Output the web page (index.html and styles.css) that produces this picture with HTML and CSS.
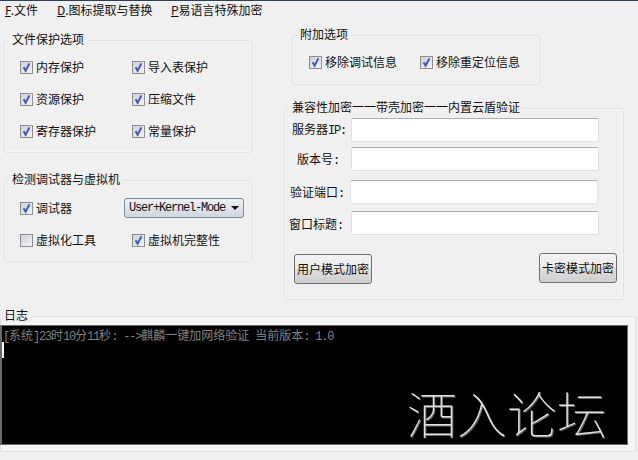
FILE: index.html
```html
<!DOCTYPE html>
<html lang="zh">
<head>
<meta charset="utf-8">
<title>麒麟一键加网络验证</title>
<link rel="stylesheet" href="styles.css">
</head>
<body>
<svg class="defs" width="0" height="0" aria-hidden="true">
  <symbol id="tick" viewBox="0 0 11 11">
    <path d="M2.6 5.2 L4.6 8.6 L8.4 1.4" fill="none" stroke="#3f5cb4" stroke-width="2"/>
  </symbol>
</svg>
<div class="app">
  <nav class="menu">
    <span class="menu-item"><u>F</u>.文件</span>
    <span class="menu-item"><u>D</u>.图标提取与替换</span>
    <span class="menu-item"><u>P</u>易语言特殊加密</span>
  </nav>
  <div class="main">
    <div class="col-left">
      <section class="group group-file">
        <div class="legend">文件保护选项</div>
        <div class="check-grid">
          <label class="check"><span class="box"><svg><use href="#tick"/></svg></span>内存保护</label>
          <label class="check"><span class="box"><svg><use href="#tick"/></svg></span>导入表保护</label>
          <label class="check"><span class="box"><svg><use href="#tick"/></svg></span>资源保护</label>
          <label class="check"><span class="box"><svg><use href="#tick"/></svg></span>压缩文件</label>
          <label class="check"><span class="box"><svg><use href="#tick"/></svg></span>寄存器保护</label>
          <label class="check"><span class="box"><svg><use href="#tick"/></svg></span>常量保护</label>
        </div>
      </section>
      <section class="group group-debug">
        <div class="legend">检测调试器与虚拟机</div>
        <div class="check-grid debug-grid">
          <label class="check"><span class="box"><svg><use href="#tick"/></svg></span>调试器</label>
          <div class="combo"><span class="latin">User+Kernel-Mode</span><i class="arrow"></i></div>
          <label class="check"><span class="box"></span>虚拟化工具</label>
          <label class="check"><span class="box"><svg><use href="#tick"/></svg></span>虚拟机完整性</label>
        </div>
      </section>
    </div>
    <div class="col-right">
      <section class="group group-extra">
        <div class="legend">附加选项</div>
        <div class="extra-row">
          <label class="check"><span class="box"><svg><use href="#tick"/></svg></span>移除调试信息</label>
          <label class="check"><span class="box"><svg><use href="#tick"/></svg></span>移除重定位信息</label>
        </div>
      </section>
      <section class="group group-compat">
        <div class="legend">兼容性加密一一带壳加密一一内置云盾验证</div>
        <div class="field"><span class="field-label label-server">服务器<span class="latin">IP:</span></span><input class="field-input" type="text"></div>
        <div class="field"><span class="field-label label-version">版本号<span class="latin">:</span></span><input class="field-input" type="text"></div>
        <div class="field field-shift"><span class="field-label label-port">验证端口<span class="latin">:</span></span><input class="field-input" type="text"></div>
        <div class="field"><span class="field-label label-title">窗口标题<span class="latin">:</span></span><input class="field-input" type="text"></div>
        <div class="actions">
          <button class="btn btn-user" type="button">用户模式加密</button>
          <button class="btn" type="button">卡密模式加密</button>
        </div>
      </section>
    </div>
  </div>
  <section class="group group-log">
    <div class="legend">日志</div>
    <div class="console">
      <div class="console-line"><span class="latin">[</span>系统<span class="latin">]23</span>时<span class="latin">10</span>分<span class="latin">11</span>秒<span class="latin">: --&gt;</span>麒麟一键加网络验证<span class="latin"> </span>当前版本<span class="latin">: 1.0</span></div>
      <div class="caret"></div>
      <div class="watermark">酒入论坛</div>
    </div>
  </section>
</div>
</body>
</html>
```
FILE: styles.css
```css
* { box-sizing: border-box; }
html, body { margin: 0; padding: 0; }
body {
  width: 638px;
  height: 460px;
  overflow: hidden;
  background: #f0f0f0;
  color: #111;
  font: 12px/14px "Noto Sans CJK SC", "Liberation Sans", sans-serif;
}
.defs { position: absolute; }
.app { height: 460px; border-top: 1px solid #2c4258; }
.latin {
  font-family: "Liberation Mono", monospace;
  font-size: 12px;
  letter-spacing: -1.2px;
  white-space: pre;
}

.menu { display: flex; height: 19px; padding: 2px 0 0 5px; }
.menu-item:nth-child(1) { width: 52px; }
.menu-item:nth-child(2) { width: 114px; }

.main { display: flex; height: 296px; }
.col-left { width: 284px; padding: 20px 0 0 4px; }
.col-right { width: 354px; padding: 15px 0 0 0; }

.group {
  border: 1px solid #dbe1e8;
  border-radius: 3px;
  box-shadow: inset 0 0 0 1px #f6f6f6;
}
.legend {
  width: fit-content;
  height: 14px;
  margin: -9px 0 0 4px;
  padding: 0 3px;
  background: #f0f0f0;
}

.group-file { width: 248px; height: 113px; }
.group-debug { width: 248px; height: 82px; margin-top: 27px; }
.group-extra { width: 248px; height: 50px; margin-left: 8px; }
.group-compat { width: 340px; height: 192px; margin-top: 23px; }
.group-log { width: 636px; height: 136px; background: #f5f5f5; }
.group-log .legend { margin-left: 0; }

.check { display: flex; align-items: center; gap: 3px; height: 14px; white-space: nowrap; }
.box {
  flex: none;
  width: 13px;
  height: 13px;
  border: 1px solid #8e8f8f;
  background: linear-gradient(135deg, #ccd0d8, #f4f5f7);
}
.box svg { display: block; width: 11px; height: 11px; }

.check-grid {
  display: grid;
  grid-template-columns: 112px 120px;
  row-gap: 18px;
  padding: 14px 0 0 15px;
}
.debug-grid { align-items: center; row-gap: 15px; padding-top: 12px; }

.combo {
  display: flex;
  align-items: center;
  justify-content: space-between;
  margin-left: -8px;
  width: 120px;
  height: 20px;
  padding: 0 4px 0 4px;
  border: 1px solid #7f8a97;
  border-radius: 3px;
  background: linear-gradient(#eef1f4, #dfe4e9 50%, #cfd6dd);
}
.arrow {
  width: 0;
  height: 0;
  border: 4px solid transparent;
  border-top: 4px solid #111;
  border-bottom: 0;
}

.extra-row { display: flex; padding: 14px 0 0 16px; }
.extra-row .check { width: 111px; }

.field { display: flex; align-items: center; height: 24px; margin-top: 5px; }
.group-compat .legend + .field { margin-top: 4px; }
.field-shift { margin-top: 9px; margin-left: -1px; }
.field-shift + .field { margin-top: 7px; }
.field-label { width: 63px; white-space: nowrap; }
.label-server { padding-left: 7px; }
.label-version { padding: 2px 0 0 12px; }
.label-port { padding: 2px 0 0 6px; }
.label-title { padding: 4px 0 0 4px; }
.field-input {
  width: 248px;
  height: 24px;
  margin: 0 0 0 3px;
  padding: 0 3px;
  border: 1px solid #dde3ea;
  border-top-color: #aab0b6;
  border-radius: 2px;
  background: #fff;
}

.actions { display: flex; justify-content: space-between; padding: 0 6px 0 9px; margin-top: 18px; }
.btn {
  width: 78px;
  height: 30px;
  padding: 0;
  border: 1px solid #707070;
  border-radius: 3px;
  background: linear-gradient(#f2f2f2, #ebebeb 48%, #dddddd 52%, #cfcfcf);
  color: #111;
  font: inherit;
}
.btn-user { margin-top: 1px; }

.console {
  position: relative;
  width: 628px;
  height: 120px;
  margin: 3px 0 0 -1px;
  border: 1px solid #6a6a6a;
  border-width: 1px 1px 1px 2px;
  background: #000;
  color: #808080;
  padding: 2px 0 0 1px;
}
.console-line { white-space: nowrap; height: 14px; }
.caret { width: 2px; height: 16px; margin: 0 0 0 -1px; background: #fff; }
.watermark {
  position: absolute;
  right: 20px;
  bottom: 1px;
  color: #e0e0e0;
  font-size: 50px;
  font-weight: 100;
  line-height: 62px;
  text-shadow: 1px 1px 0 #666;
}
```
